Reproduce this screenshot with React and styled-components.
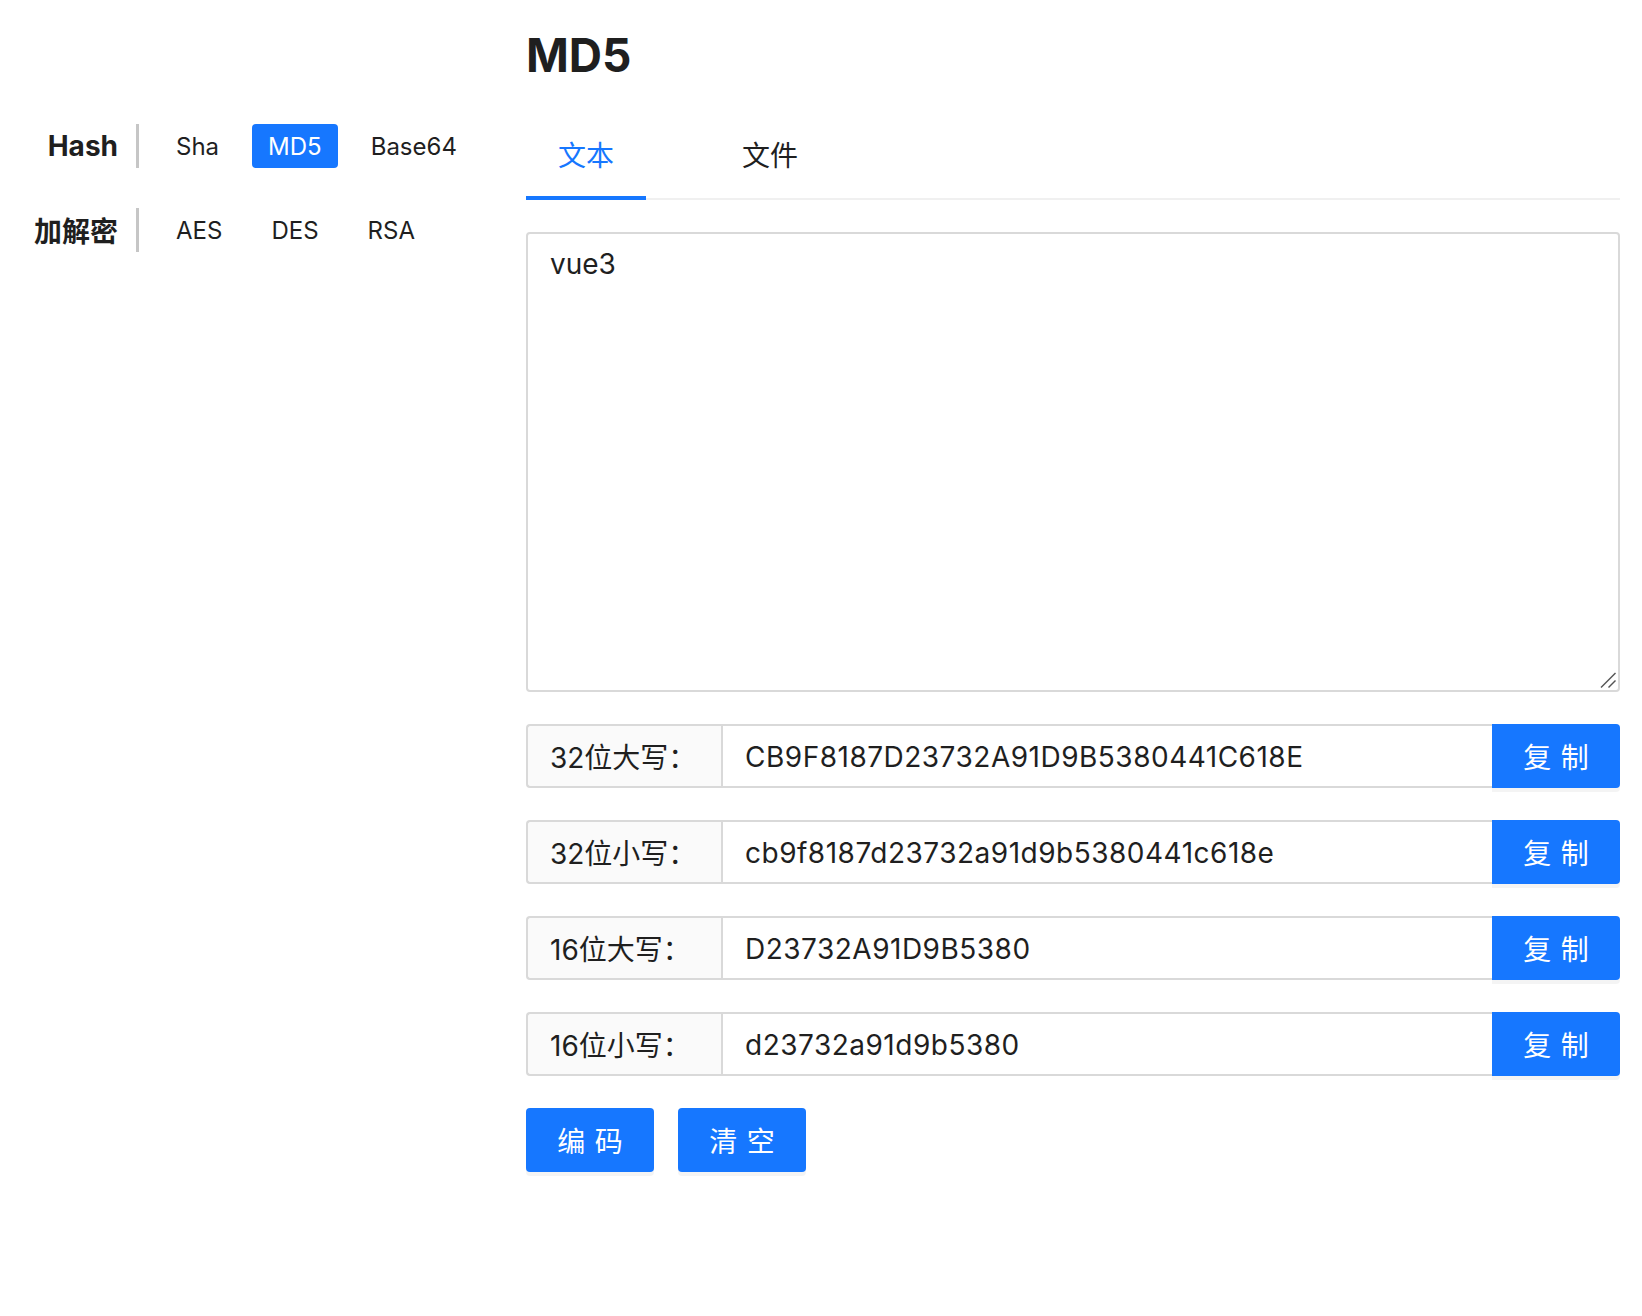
import React, { useState } from "react";
import styled, { createGlobalStyle } from "styled-components";

const BLUE = "#1677ff";
const TEXT = "#1f1f1f";
const BORDER = "#d9d9d9";
const FONT = `Inter, "Noto Sans CJK SC", "Noto Sans", sans-serif`;

const GlobalStyle = createGlobalStyle`
  html, body { margin: 0; padding: 0; background: #fff; }
  body { font-family: ${FONT}; color: ${TEXT}; }
  *, *::before, *::after { box-sizing: border-box; }
`;

const Page = styled.div`
  display: flex;
  min-height: 1316px;
`;

const Sidebar = styled.nav`
  width: 526px;
  flex-shrink: 0;
  padding-top: 124px;
  display: flex;
  flex-direction: column;
  gap: 40px;
`;

const NavRow = styled.div`
  display: flex;
  align-items: center;
  height: 44px;
`;

const NavLabel = styled.div`
  width: 118px;
  margin-right: 18px;
  text-align: right;
  font-size: 28px;
  font-weight: 700;
  white-space: nowrap;
  color: ${TEXT};
`;

const NavDivider = styled.div`
  width: 3px;
  height: 44px;
  background: #c6c6c6;
  margin-right: 21px;
`;

const NavItems = styled.div`
  display: flex;
  gap: 17px;
`;

const NavButton = styled.button`
  height: 44px;
  padding: 0 16px;
  border: none;
  border-radius: 4px;
  font-family: ${FONT};
  font-size: 24px;
  display: flex;
  align-items: center;
  cursor: pointer;
  background: ${(p) => (p.$active ? BLUE : "transparent")};
  color: ${(p) => (p.$active ? "#fff" : TEXT)};
`;

const Main = styled.main`
  flex: 1;
  min-width: 0;
  padding: 32px 22px 0 0;
  display: flex;
  flex-direction: column;
`;

const Title = styled.h1`
  margin: 0 0 36px;
  font-size: 46px;
  line-height: 46px;
  font-weight: 700;
  color: ${TEXT};
`;

const TabNav = styled.div`
  display: flex;
  gap: 64px;
  border-bottom: 2px solid #f0f0f0;
  margin-bottom: 32px;
`;

const Tab = styled.div`
  position: relative;
  padding: 20px 32px;
  font-size: 28px;
  line-height: 44px;
  cursor: pointer;
  color: ${(p) => (p.$active ? BLUE : TEXT)};
`;

const InkBar = styled.span`
  position: absolute;
  left: 0;
  right: 0;
  bottom: -2px;
  height: 4px;
  background: ${BLUE};
`;

const TextAreaWrap = styled.div`
  position: relative;
`;

const TextArea = styled.textarea`
  display: block;
  width: 100%;
  height: 460px;
  border: 2px solid ${BORDER};
  border-radius: 4px;
  padding: 8px 22px;
  font-family: ${FONT};
  font-size: 28px;
  line-height: 1.5715;
  color: ${TEXT};
  outline: none;
  margin: 0;
  resize: none;
`;

const Grip = styled.svg`
  position: absolute;
  right: 3px;
  bottom: 3px;
  width: 18px;
  height: 18px;
  pointer-events: none;
`;

const Results = styled.div`
  display: flex;
  flex-direction: column;
  gap: 32px;
  margin-top: 32px;
`;

const ResultRow = styled.div`
  display: flex;
  height: 64px;
`;

const Addon = styled.div`
  width: 195px;
  flex-shrink: 0;
  background: #fafafa;
  border: 2px solid ${BORDER};
  border-right: 0;
  border-radius: 4px 0 0 4px;
  padding: 0 22px;
  display: flex;
  align-items: center;
  font-size: 28px;
  white-space: nowrap;
  color: ${TEXT};
`;

const ValueInput = styled.input`
  flex: 1;
  min-width: 0;
  height: 64px;
  border: 2px solid ${BORDER};
  border-right: 0;
  padding: 2px 22px 0;
  font-family: ${FONT};
  font-size: 28px;
  letter-spacing: 0.5px;
  color: ${TEXT};
  background: #fff;
  outline: none;
  margin: 0;
`;

const BlueButton = styled.button`
  width: 128px;
  height: 64px;
  flex-shrink: 0;
  border: none;
  padding: 0;
  background: ${BLUE};
  color: #fff;
  font-family: ${FONT};
  font-size: 28px;
  cursor: pointer;
  box-shadow: 0 4px 0 rgba(0, 0, 0, 0.045);
  border-radius: ${(p) => (p.$attached ? "0 4px 4px 0" : "4px")};
  display: flex;
  align-items: center;
  justify-content: center;
`;

const Spaced = styled.span`
  letter-spacing: 0.34em;
  margin-right: -0.34em;
`;

const Actions = styled.div`
  display: flex;
  gap: 24px;
  margin-top: 32px;
`;

const navGroups = [
  { label: "Hash", items: ["Sha", "MD5", "Base64"] },
  { label: "加解密", items: ["AES", "DES", "RSA"] },
];

const results = [
  { label: "32位大写：", value: "CB9F8187D23732A91D9B5380441C618E" },
  { label: "32位小写：", value: "cb9f8187d23732a91d9b5380441c618e" },
  { label: "16位大写：", value: "D23732A91D9B5380" },
  { label: "16位小写：", value: "d23732a91d9b5380" },
];

export default function App() {
  const [tab, setTab] = useState(0);
  const [text, setText] = useState("vue3");
  return (
    <>
      <GlobalStyle />
      <Page>
        <Sidebar>
          {navGroups.map((g) => (
            <NavRow key={g.label}>
              <NavLabel>{g.label}</NavLabel>
              <NavDivider />
              <NavItems>
                {g.items.map((it) => (
                  <NavButton key={it} $active={it === "MD5"}>
                    {it}
                  </NavButton>
                ))}
              </NavItems>
            </NavRow>
          ))}
        </Sidebar>
        <Main>
          <Title>MD5</Title>
          <TabNav>
            {["文本", "文件"].map((t, i) => (
              <Tab key={t} $active={tab === i} onClick={() => setTab(i)}>
                {t}
                {tab === i && <InkBar />}
              </Tab>
            ))}
          </TabNav>
          <TextAreaWrap>
            <TextArea value={text} onChange={(e) => setText(e.target.value)} />
            <Grip viewBox="0 0 18 18">
              <line x1="2" y1="16.5" x2="16.5" y2="2" stroke="#555" strokeWidth="1.4" />
              <line x1="9.5" y1="16.5" x2="16.5" y2="9.5" stroke="#555" strokeWidth="1.4" />
            </Grip>
          </TextAreaWrap>
          <Results>
            {results.map((r) => (
              <ResultRow key={r.label}>
                <Addon>{r.label}</Addon>
                <ValueInput readOnly value={r.value} />
                <BlueButton $attached>
                  <Spaced>复制</Spaced>
                </BlueButton>
              </ResultRow>
            ))}
          </Results>
          <Actions>
            <BlueButton>
              <Spaced>编码</Spaced>
            </BlueButton>
            <BlueButton>
              <Spaced>清空</Spaced>
            </BlueButton>
          </Actions>
        </Main>
      </Page>
    </>
  );
}
